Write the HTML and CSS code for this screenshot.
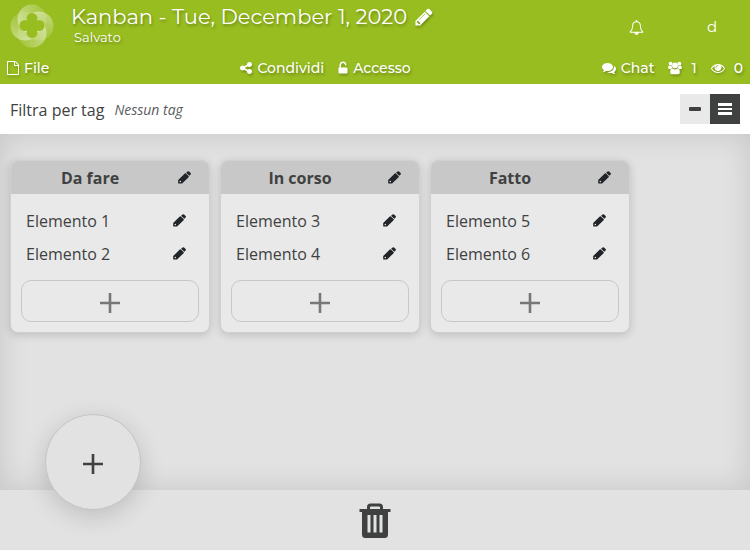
FILE: index.html
```html
<!DOCTYPE html>
<html lang="it">
<head>
<meta charset="utf-8">
<title>Kanban - Tue, December 1, 2020</title>
<meta name="viewport" content="width=device-width, initial-scale=1">
<link rel="stylesheet" href="styles.css">
</head>
<body>
<svg class="sprite" aria-hidden="true">
  <symbol id="edit" viewBox="0 0 14 14">
    <path d="M.2 13.200V9.800L7.300 2.600q.6-.4 1.200 0l2.900 2.900q.5.600 0 1.200l-7 6.800H.6zM8.700 2 10.300.6q.8-.6 1.600 0l1.700 1.600q.6.800 0 1.600L12.200 5.200z"/>
    <circle cx="2.500" cy="11.400" r=".8" fill="#e9e9e9"/>
  </symbol>
  <symbol id="plus" viewBox="0 0 20 20">
    <path d="M8.700 0h2.600v8.700H20v2.600h-8.700V20H8.700v-8.700H0V8.700h8.700z"/>
  </symbol>
  <symbol id="pencil" viewBox="0 0 1792 1792">
    <path d="M491 1536l91-91-235-235-91 91v107h128v128h107zm523-928q0-22-22-22-10 0-17 7l-542 542q-7 7-7 17 0 22 22 22 10 0 17-7l542-542q7-7 7-17zm-54-192l416 416-832 832h-416v-416zm683 96q0 53-37 90l-166 166-416-416 166-165q36-38 90-38 53 0 91 38l235 234q37 39 37 91z"/>
  </symbol>
</svg>

<header class="header">
  <div class="topbar">
    <a class="logo" href="#" aria-label="Home">
      <svg viewBox="0 0 44 44">
        <defs>
          <linearGradient id="petal" x1="0" y1="0" x2="1" y2="0">
            <stop offset="0" stop-color="#fff" stop-opacity=".42"/>
            <stop offset="1" stop-color="#fff" stop-opacity=".1"/>
          </linearGradient>
          <mask id="clover">
            <path fill="#fff" d="M0 0h44v44H0z"/>
            <g fill="#000"><circle cx="22" cy="14.500" r="5.500"/><circle cx="22" cy="28.500" r="5.500"/><circle cx="15" cy="21.500" r="5.500"/><circle cx="29" cy="21.500" r="5.500"/><path d="M17 17h10v9H17z"/></g>
          </mask>
        </defs>
        <g fill="url(#petal)" mask="url(#clover)">
          <circle cx="22" cy="15" r="14.500"/>
          <circle cx="22" cy="15" r="14.500" transform="rotate(90 22 22)"/>
          <circle cx="22" cy="15" r="14.500" transform="rotate(180 22 22)"/>
          <circle cx="22" cy="15" r="14.500" transform="rotate(270 22 22)"/>
        </g>
      </svg>
    </a>
    <div class="title-block">
      <div class="title-row">
        <h1 class="title">Kanban - Tue, December 1, 2020</h1>
        <button class="title-edit" type="button" aria-label="Rinomina"><svg><use href="#pencil"/></svg></button>
      </div>
      <span class="status">Salvato</span>
    </div>
    <div class="user">
      <button class="user-button" type="button" aria-label="Notifiche">
        <svg viewBox="0 0 1792 1792"><path d="M912 1696q0-16-16-16-59 0-101.500-42.500t-42.500-101.500q0-16-16-16t-16 16q0 73 51.500 124.500t124.500 51.500q16 0 16-16zm-666-288h1300q-266-300-266-832 0-51-24-105t-69-103-121.500-80.500-169.500-31.500-169.500 31.500-121.500 80.500-69 103-24 105q0 532-266 832zm1482 0q0 52-38 90t-90 38h-448q0 106-75 181t-181 75-181-75-75-181h-448q-52 0-90-38t-38-90q50-42 91-88t85-119.500 74.500-158.500 50-206 19.500-260q0-152 117-282.500t307-158.500q-8-19-8-39 0-40 28-68t68-28 68 28 28 68q0 20-8 39 190 28 307 158.500t117 282.500q0 139 19.500 260t50 206 74.500 158.500 85 119.500 91 88z"/></svg>
      </button>
      <button class="user-button" type="button">d</button>
    </div>
  </div>
  <nav class="toolbar">
    <div class="tools">
      <button class="tool" type="button"><svg class="file" viewBox="128 0 1536 1792"><path d="M1596 380q28 28 48 76t20 88v1152q0 40-28 68t-68 28h-1344q-40 0-68-28t-28-68v-1600q0-40 28-68t68-28h896q40 0 88 20t76 48zm-444-244v376h376q-10-29-22-41l-313-313q-12-12-41-22zm384 1528v-1024h-416q-40 0-68-28t-28-68v-416h-768v1536h1280z"/></svg>File</button>
    </div>
    <div class="tools">
      <button class="tool" type="button"><svg viewBox="128 128 1536 1536"><path d="M1344 1024q133 0 226.500 93.500t93.500 226.500-93.500 226.500-226.500 93.500-226.500-93.500-93.500-226.500q0-12 2-34l-360-180q-92 86-218 86-133 0-226.500-93.500t-93.500-226.500 93.500-226.500 226.500-93.500q126 0 218 86l360-180q-2-22-2-34 0-133 93.500-226.500t226.500-93.500 226.500 93.500 93.500 226.500-93.500 226.500-226.500 93.500q-126 0-218-86l-360 180q2 22 2 34t-2 34l360 180q92-86 218-86z"/></svg>Condividi</button>
      <button class="tool" type="button"><svg class="narrow" viewBox="300 0 1192 1792"><path d="M1376 832q40 0 68 28t28 68v576q0 40-28 68t-68 28h-960q-40 0-68-28t-28-68v-576q0-40 28-68t68-28h32v-320q0-185 131.500-316.500t316.500-131.500 316.500 131.500 131.500 316.500q0 26-19 45t-45 19h-64q-26 0-45-19t-19-45q0-106-75-181t-181-75-181 75-75 181v320h672z"/></svg>Accesso</button>
    </div>
    <div class="tools">
      <button class="tool" type="button"><svg viewBox="0 0 1792 1792"><path d="M1408 768q0 139-94 257t-256.500 186.500-353.500 68.500q-86 0-176-16-124 88-278 128-36 9-86 16h-3q-11 0-20.500-8t-11.500-21q-1-3-1-6.500t.5-6.500 2-6l2.500-5 3.500-5.500 4-5 4.500-5 4-4.500q5-6 23-25t26-29.500 22.500-29 25-38.500 20.500-44q-124-72-195-177t-71-224q0-139 94-257t256.500-186.500 353.500-68.500 353.500 68.500 256.500 186.500 94 257zm384 256q0 120-71 224.500t-195 176.500q10 24 20.500 44t25 38.500 22.500 29 26 29.500 23 25q1 1 4 4.500t4.500 5 4 5 3.500 5.500l2.500 5 2 6 .5 6.500-1 6.500q-3 14-13 22t-22 7q-50-7-86-16-154-40-278-128-90 16-176 16-271 0-472-132 58 4 88 4 161 0 309-45t264-129q125-92 192-212t67-254q0-77-23-152 129 71 204 178t75 230z"/></svg>Chat</button>
      <button class="tool count" type="button" aria-label="Utenti: 1"><svg viewBox="0 0 16 15"><circle cx="3" cy="2.500" r="2.200"/><circle cx="13" cy="2.500" r="2.200"/><circle cx="8" cy="4.500" r="3.300"/><path d="M.2 7.700Q0 4.700 1.300 4.500q1.600 1 3 .5Q4 6.500 5 7.500 3.700 7.500 3 8.500H1.300Q.2 8.500 .2 7.700zM15.800 7.700Q16 4.700 14.700 4.500q-1.600 1-3 .5Q12 6.500 11 7.500q1.300 0 2 1h1.700q1.100 0 1.100-.8zM5 8.100q3 2 6 0 2.500-.4 2.500 4.500Q13.500 14.500 11.500 14.500h-7q-2 0-2-1.900 0-4.900 2.500-4.500z"/></svg>1</button>
      <button class="tool count" type="button" aria-label="Spettatori: 0"><svg viewBox="0 0 1792 1792"><path d="M1664 960q-152-236-381-353 61 104 61 225 0 185-131.500 316.500t-316.500 131.500-316.500-131.500-131.500-316.500q0-121 61-225-229 117-381 353 133 205 333.500 326.500t434.500 121.500 434.500-121.500 333.500-326.500zm-720-384q0-20-14-34t-34-14q-125 0-214.500 89.500t-89.500 214.500q0 20 14 34t34 14 34-14 14-34q0-86 61-147t147-61q20 0 34-14t14-34zm848 384q0 34-20 69-140 230-376.500 368.500t-499.500 138.500-499.500-139-376.500-368q-20-35-20-69t20-69q140-229 376.500-368t499.500-139 499.500 139 376.500 368q20 35 20 69z"/></svg>0</button>
    </div>
  </nav>
</header>

<section class="filter">
  <span>Filtra per tag</span>
  <em class="no-tags">Nessun tag</em>
  <div class="views">
    <button class="view" type="button" aria-label="Vista compatta"><svg viewBox="0 0 14 14"><rect x="1" y="5" width="12" height="4" rx="1"/></svg></button>
    <button class="view active" type="button" aria-label="Vista estesa"><svg viewBox="0 0 14 14"><path d="M0 1h14v3H0zM0 6h14v2H0zM0 10h14v3H0z"/></svg></button>
  </div>
</section>

<main class="board">
  <section class="column">
    <header class="column-head"><h2>Da fare</h2><button class="edit" type="button" aria-label="Modifica Da fare"><svg><use href="#edit"/></svg></button></header>
    <ul class="items">
      <li class="item">Elemento 1<button class="edit" type="button" aria-label="Modifica Elemento 1"><svg><use href="#edit"/></svg></button></li>
      <li class="item">Elemento 2<button class="edit" type="button" aria-label="Modifica Elemento 2"><svg><use href="#edit"/></svg></button></li>
    </ul>
    <button class="add-item" type="button" aria-label="Aggiungi elemento"><svg><use href="#plus"/></svg></button>
  </section>
  <section class="column">
    <header class="column-head"><h2>In corso</h2><button class="edit" type="button" aria-label="Modifica In corso"><svg><use href="#edit"/></svg></button></header>
    <ul class="items">
      <li class="item">Elemento 3<button class="edit" type="button" aria-label="Modifica Elemento 3"><svg><use href="#edit"/></svg></button></li>
      <li class="item">Elemento 4<button class="edit" type="button" aria-label="Modifica Elemento 4"><svg><use href="#edit"/></svg></button></li>
    </ul>
    <button class="add-item" type="button" aria-label="Aggiungi elemento"><svg><use href="#plus"/></svg></button>
  </section>
  <section class="column">
    <header class="column-head"><h2>Fatto</h2><button class="edit" type="button" aria-label="Modifica Fatto"><svg><use href="#edit"/></svg></button></header>
    <ul class="items">
      <li class="item">Elemento 5<button class="edit" type="button" aria-label="Modifica Elemento 5"><svg><use href="#edit"/></svg></button></li>
      <li class="item">Elemento 6<button class="edit" type="button" aria-label="Modifica Elemento 6"><svg><use href="#edit"/></svg></button></li>
    </ul>
    <button class="add-item" type="button" aria-label="Aggiungi elemento"><svg><use href="#plus"/></svg></button>
  </section>
</main>

<footer class="footer">
  <button class="add-board" type="button" aria-label="Aggiungi colonna"><svg><use href="#plus"/></svg></button>
  <button class="trash" type="button" aria-label="Cestino">
    <svg viewBox="0 0 32 36"><path fill-rule="evenodd" d="M8 6V4q0-3.500 3.500-3.500h9Q24 .5 24 4v2h7.500v3H29v22.500q0 3.500-3.500 3.500h-19Q3 35 3 31.500V9H.5V6zM11 6h10V4.500q0-1-1-1h-8q-1 0-1 1zM8.500 12v17.500h3V12zM14.500 12v17.500h3V12zM20.500 12v17.500h3V12z"/></svg>
  </button>
</footer>
</body>
</html>
```
FILE: styles.css
```css
* {
  box-sizing: border-box;
}

body {
  margin: 0;
  min-height: 100vh;
  display: flex;
  flex-direction: column;
  background: #e2e2e2;
  color: #3f4141;
  font: 16px/24px "Open Sans", "Noto Sans", sans-serif;
}

button {
  margin: 0;
  padding: 0;
  border: 0;
  background: none;
  color: inherit;
  font: inherit;
  cursor: pointer;
}

svg {
  display: block;
  fill: currentColor;
}

h1, h2, ul {
  margin: 0;
  padding: 0;
}

.sprite {
  position: absolute;
  width: 0;
  height: 0;
}

.header {
  background: #98bd20;
  color: #fff;
  font-family: Montserrat, Inter, sans-serif;
}

.topbar {
  display: flex;
  height: 52px;
  padding: 4px 12px 0 10px;
}

.logo svg {
  width: 44px;
  height: 44px;
}

.logo {
  color: inherit;
}

.title-block {
  flex: 1;
  padding-left: 17px;
  text-shadow: 1px 2px 3px rgba(0, 0, 0, .3);
}

.title-row {
  display: flex;
  align-items: center;
  gap: 7px;
}

.title {
  font-size: 21px;
  font-weight: 400;
  line-height: 26px;
}

.title-edit svg {
  width: 20px;
  height: 20px;
  filter: drop-shadow(1px 2px 1px rgba(0, 0, 0, .25));
}

.status {
  display: block;
  padding-left: 3px;
  font-size: 13px;
  line-height: 15px;
}

.user {
  display: flex;
  gap: 24px;
}

.user-button {
  display: grid;
  place-items: center;
  width: 52px;
  height: 46px;
  font-size: 15px;
}

.user-button svg {
  width: 15px;
  height: 15px;
}

.toolbar {
  display: flex;
  justify-content: space-between;
  height: 32px;
  padding: 0 7px;
  font-size: 14px;
  font-weight: 500;
}

.tools {
  display: flex;
  gap: 14px;
}

.tool {
  display: flex;
  align-items: center;
  gap: 5px;
  text-shadow: 1px 2px 3px rgba(0, 0, 0, .3);
}

.tool svg {
  width: 14px;
  height: 14px;
  filter: drop-shadow(1px 2px 1px rgba(0, 0, 0, .2));
}

.tool .narrow {
  width: 10px;
}

.tool .file,
.tool svg[viewBox^="128 128"] {
  width: 12px;
}

.count {
  gap: 9px;
}

.filter {
  display: flex;
  align-items: center;
  height: 50px;
  padding: 2px 10px 0;
  gap: 10px;
  background: #fff;
}

.no-tags {
  color: #5b5d5d;
  font-size: 14px;
}

.views {
  display: flex;
  margin: -2px 0 0 auto;
}

.view {
  display: grid;
  place-items: center;
  width: 30px;
  height: 30px;
  background: #e9e9e9;
}

.view svg {
  width: 14px;
  height: 14px;
}

.view.active {
  background: #3f4141;
  color: #fff;
}

.board {
  flex: 1;
  display: flex;
  align-items: flex-start;
  gap: 10px;
  padding: 26px 10px;
  box-shadow: inset 0 0 30px 0 rgba(0, 0, 0, .13);
}

.column {
  width: 200px;
  overflow: hidden;
  border: 1px solid #d0d0d0;
  border-radius: 8px;
  background: #e9e9e9;
  box-shadow: 0 2px 8px rgba(0, 0, 0, .16);
}

.column-head {
  display: flex;
  align-items: center;
  height: 33px;
  padding: 0 18px;
  background: #c8c8c8;
}

.column-head h2 {
  flex: 1;
  padding-right: 27px;
  text-align: center;
  font-size: 16px;
  line-height: 24px;
}

.edit {
  color: #212529;
}

.edit svg {
  width: 13px;
  height: 13px;
}

.items {
  padding: 10px 23px 10px 15px;
  list-style: none;
}

.item {
  display: flex;
  align-items: center;
  justify-content: space-between;
  height: 33px;
}

.item .edit {
  padding-bottom: 1px;
}

.add-item {
  display: grid;
  place-items: center;
  width: calc(100% - 20px);
  height: 42px;
  margin: 0 10px 10px;
  padding-top: 4px;
  border: 1px solid #c8c8c8;
  border-radius: 10px;
  color: #777;
}

.add-item svg,
.add-board svg {
  width: 20px;
  height: 20px;
}

.footer {
  position: relative;
  display: flex;
  justify-content: center;
  align-items: center;
  height: 60px;
  padding-top: 2px;
}

.add-board {
  position: absolute;
  left: 45px;
  bottom: 40px;
  display: grid;
  place-items: center;
  width: 96px;
  height: 96px;
  padding-top: 4px;
  border: 1px solid #c4c4c4;
  border-radius: 50%;
  background: #e2e2e2;
  box-shadow: 0 6px 24px rgba(0, 0, 0, .16);
}

.trash svg {
  width: 32px;
  height: 36px;
}
```
